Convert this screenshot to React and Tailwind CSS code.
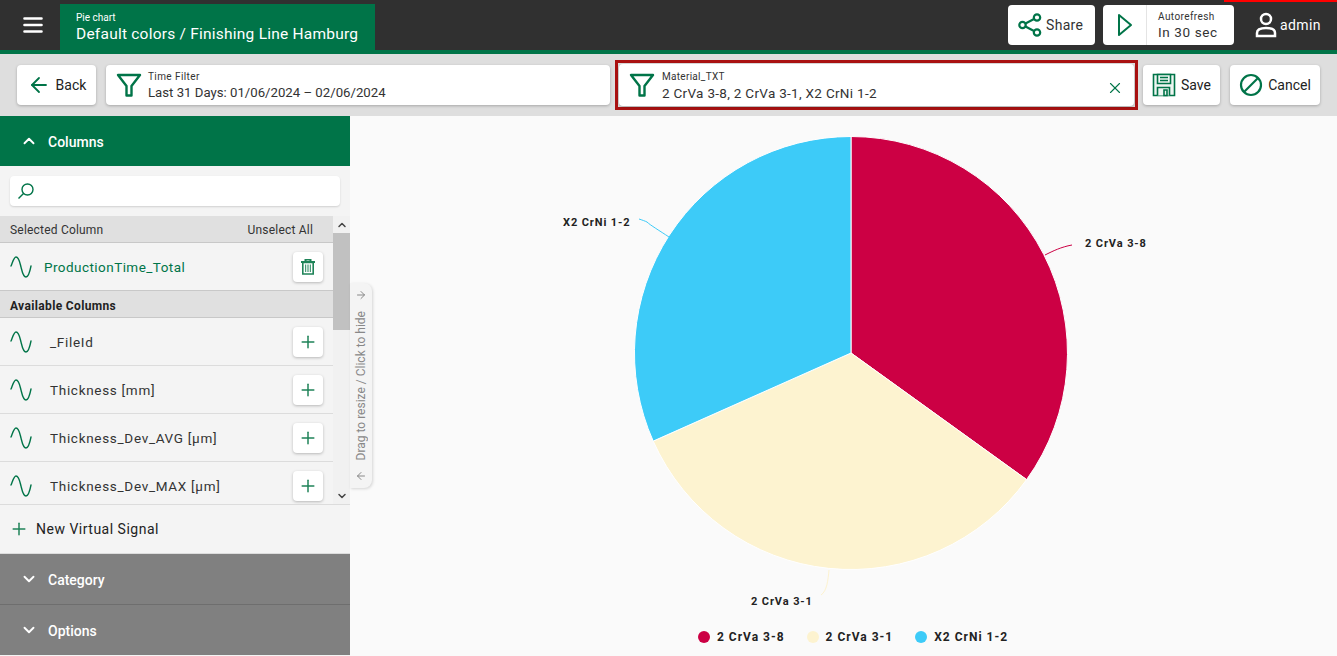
import { ArrowLeft, ArrowRight, ChevronDown, ChevronUp, Plus, X } from 'lucide-react';

const green = '#007448';
const font = { fontFamily: 'Roboto, "Liberation Sans", sans-serif' };

const columns = ['_FileId', 'Thickness [mm]', 'Thickness_Dev_AVG [µm]', 'Thickness_Dev_MAX [µm]'];

function FilterIcon() {
  return (
    <svg width="26" height="26" viewBox="0 0 26 26" fill="none" stroke={green} strokeWidth="2.400" className="shrink-0">
      <path d="M2 3h22l-8.500 11v9.500h-5v-9.500z" strokeLinejoin="round" />
    </svg>
  );
}

function WaveIcon() {
  return (
    <svg width="22" height="22" viewBox="0 0 22 22" fill="none" stroke={green} strokeWidth="1.400" className="shrink-0">
      <path d="M1 10C3 5 4 1 6 1C9 1 10 7 11 11C12 15 13 21 16 21C18 21 20 15 21 10" strokeLinecap="round" />
    </svg>
  );
}

function ShareIcon() {
  return (
    <svg width="24" height="24" viewBox="0 0 24 24" fill="none" stroke={green} strokeWidth="2.200">
      <circle cx="4.500" cy="12" r="3.200" />
      <circle cx="19" cy="4.500" r="3.200" />
      <circle cx="19" cy="19.500" r="3.200" />
      <path d="M7.500 10.500l8.500-4.500M7.500 13.500l8.500 4.500" />
    </svg>
  );
}

function SaveIcon() {
  return (
    <svg width="24" height="24" viewBox="0 0 24 24" fill="#eef6f2" stroke={green} strokeWidth="1.600">
      <path d="M1.500 1.500h21v21h-21z" />
      <path d="M5.500 1.500h13v9h-13zM8 4.500h8M8 7.500h8M5.500 22.500v-8h12v8M12 17h3v5.500h-3z" />
    </svg>
  );
}

function TrashIcon() {
  return (
    <svg width="14" height="16" viewBox="0 0 14 16" fill="none" stroke="#1f8358">
      <path d="M0 3h14M4.500 2V.5h5V2" strokeWidth="2" />
      <path d="M1.800 3.500h10.400v11.500H1.800z" strokeWidth="1.600" />
      <path d="M4.700 5.500v7.500M7 5.500v7.500M9.300 5.500v7.500" strokeWidth="1" />
    </svg>
  );
}

function Pie() {
  return (
    <svg width="987" height="540" viewBox="0 0 987 540" className="block">
      <path d="M501 237L501 20.500A216.500 216.500 0 0 1 676.600 363.600Z" fill="#cc0044" stroke="#fff" strokeWidth="1" />
      <path d="M501 237L676.600 363.600A216.500 216.500 0 0 1 303.200 325.100Z" fill="#fdf3d0" stroke="#fff" strokeWidth="1" />
      <path d="M501 237L303.200 325.100A216.500 216.500 0 0 1 501 20.500Z" fill="#3dcbf8" stroke="#fff" strokeWidth="1" />
      <path d="M695 139c8-4 16-8 27-10" fill="none" stroke="#cc0044" />
      <path d="M319 121c-9-6-19-12-22-15c-2-1-5-2-8-3" fill="none" stroke="#3dcbf8" />
      <path d="M479 454c-1 10-2 21-8 25" fill="none" stroke="#fdf3d0" />
      <g fontSize="11" fontWeight="700" fill="#222" letterSpacing="0.9" style={font}>
        <text x="735" y="131">2 CrVa 3-8</text>
        <text x="213" y="110">X2 CrNi 1-2</text>
        <text x="401" y="489">2 CrVa 3-1</text>
      </g>
    </svg>
  );
}

function LegendItem({ color, label }) {
  return (
    <div className="flex items-center gap-[7px]">
      <span className="h-3 w-3 rounded-full" style={{ backgroundColor: color }} />
      <span className="text-[12px] font-bold tracking-[1px] text-[#222]">{label}</span>
    </div>
  );
}

function AccordionHead({ label, open }) {
  const Icon = open ? ChevronUp : ChevronDown;
  return (
    <div className={`flex h-[50px] items-center gap-[10px] pl-[20px] text-[14px] font-medium text-white ${open ? 'bg-[#007448]' : 'bg-[#808080]'}`}>
      <Icon size={18} strokeWidth={2.500} />
      <span className="pt-[2px]">{label}</span>
    </div>
  );
}

function ToolButton({ icon, label, width }) {
  return (
    <button className={`flex h-[40px] items-center justify-center gap-[5px] rounded-[4px] bg-white text-[14px] text-[#222] shadow-[0_1px_3px_rgba(0,0,0,0.25)] ${width}`}>
      {icon}
      {label}
    </button>
  );
}

export default function App() {
  return (
    <div className="relative flex h-[656px] w-[1337px] flex-col overflow-hidden bg-[#fafafa]" style={font}>
      {/* top bar */}
      <header className="flex h-[54px] shrink-0 border-b-4 border-[#007448] bg-[#303030]">
        <div className="flex w-[60px] items-center justify-center pl-[6px]">
          <svg width="20" height="16" viewBox="0 0 20 16" stroke="#fff" strokeWidth="2.600" strokeLinecap="round">
            <path d="M1.500 1.500h17M1.500 8h17M1.500 14.500h17" />
          </svg>
        </div>
        <div className="mt-[4px] w-[315px] bg-[#007448] pl-[16px] text-white">
          <div className="mt-[9px] text-[10px] leading-[10px]">Pie chart</div>
          <div className="mt-[1px] text-[15.500px] leading-[20px] tracking-[0.23px]">Default colors / Finishing Line Hamburg</div>
        </div>
        <div className="ml-auto mt-[5px] flex h-[40px] w-[87px] items-center rounded-[4px] bg-white pl-[10px] text-[14px] tracking-[0.3px] text-[#333]">
          <ShareIcon />
          <span className="ml-[4px]">Share</span>
        </div>
        <div className="ml-[8px] mt-[5px] flex h-[40px] w-[131px] rounded-[4px] bg-white">
          <div className="flex w-[44px] items-center justify-center border-r border-[#e4e4e4]">
            <svg width="16" height="24" viewBox="0 0 16 24" fill="none" stroke={green} strokeWidth="2">
              <path d="M2 2l12 10L2 22z" strokeLinejoin="round" />
            </svg>
          </div>
          <div className="pl-[11px] text-[#333]">
            <div className="mt-[6px] text-[10px] leading-[12px] tracking-[0.4px]">Autorefresh</div>
            <div className="text-[13.500px] leading-[18px] tracking-[0.6px]">In 30 sec</div>
          </div>
        </div>
        <div className="ml-[21px] mr-[16px] flex items-center gap-[3px] text-[14px] tracking-[0.4px] text-white">
          <svg width="22" height="26" viewBox="0 0 22 26" fill="none" stroke="#fff" strokeWidth="2.500">
            <circle cx="11" cy="7" r="5" />
            <path d="M2 24v-3c0-4 4-5 9-5s9 1 9 5v3z" />
          </svg>
          <span>admin</span>
        </div>
        <div className="absolute right-0 top-0 h-[2px] w-[113px] bg-[#ff0000]" />
      </header>

      {/* filter toolbar */}
      <div className="flex h-[62px] shrink-0 items-center bg-[#dedede] pl-[17px]">
        <ToolButton width="w-[79px]" icon={<ArrowLeft size={24} color={green} strokeWidth={1.800} />} label="Back" />
        <div className="ml-[10px] flex h-[40px] w-[504px] items-center rounded-[4px] bg-white pl-[10px] shadow-[0_1px_3px_rgba(0,0,0,0.25)]">
          <FilterIcon />
          <div className="ml-[6px] mt-[2px] text-[#333]">
            <div className="text-[10px] leading-[12px] tracking-[0.4px]">Time Filter</div>
            <div className="mt-[2px] text-[13.200px] leading-[16px]">Last 31 Days: 01/06/2024 – 02/06/2024</div>
          </div>
        </div>
        <div className="ml-[5px] flex h-[50px] w-[523px] items-center border-[3px] border-[#aa1111] p-[1px]">
          <div className="flex h-full w-full items-center rounded-[4px] bg-white px-[10px] shadow-[0_1px_3px_rgba(0,0,0,0.25)]">
            <FilterIcon />
            <div className="ml-[7px] mt-[2px] text-[#333]">
              <div className="text-[10px] leading-[12px] tracking-[0.3px]">Material_TXT</div>
              <div className="mt-[2px] text-[13.500px] leading-[16px] tracking-[0.3px]">2 CrVa 3-8, 2 CrVa 3-1, X2 CrNi 1-2</div>
            </div>
            <X size={18} color={green} strokeWidth={1.500} className="ml-auto mt-[6px]" />
          </div>
        </div>
        <div className="ml-[5px] flex gap-[10px]">
          <ToolButton width="w-[77px]" icon={<SaveIcon />} label="Save" />
          <ToolButton
            width="w-[90px]"
            icon={
              <svg width="24" height="24" viewBox="0 0 24 24" fill="none" stroke={green} strokeWidth="2.200">
                <circle cx="12" cy="12" r="10" />
                <path d="M5 19L19 5" />
              </svg>
            }
            label="Cancel"
          />
        </div>
      </div>

      <div className="flex min-h-0 flex-1">
        {/* sidebar */}
        <aside className="flex w-[350px] shrink-0 flex-col bg-[#f4f4f4]">
          <AccordionHead label="Columns" open />
          <div className="flex h-[50px] shrink-0 items-center px-[10px]">
            <div className="flex h-[30px] w-full items-center rounded-[4px] bg-white pl-[7px] shadow-[0_1px_2px_rgba(0,0,0,0.15)]">
              <svg width="18" height="18" viewBox="0 0 18 18" fill="none" stroke={green} strokeWidth="1.400">
                <circle cx="10.500" cy="7.500" r="5.500" />
                <path d="M6.500 11.500L1.500 16.500" />
              </svg>
            </div>
          </div>
          <div className="flex h-[288px] shrink-0 overflow-hidden">
            <div className="min-w-0 flex-1">
              <div className="flex h-[27px] items-center justify-between border-b border-[#c8c8c8] bg-[#e0e0e0] pl-[10px] pr-[20px] pt-[2px] text-[12px] tracking-[0.2px] text-[#333]">
                <span>Selected Column</span>
                <span>Unselect All</span>
              </div>
              <div className="flex h-[47px] items-center px-[10px]">
                <WaveIcon />
                <span className="ml-[12px] pt-[2px] text-[13.500px] tracking-[0.45px] text-[#007448]">ProductionTime_Total</span>
                <button className="ml-auto flex h-[30px] w-[30px] items-center justify-center rounded-[4px] bg-white shadow-[0_1px_3px_rgba(0,0,0,0.25)]">
                  <TrashIcon />
                </button>
              </div>
              <div className="flex h-[28px] items-center border-y border-[#c8c8c8] bg-[#e0e0e0] pl-[10px] pt-[3px] text-[12px] font-bold tracking-[0.35px] text-[#222]">
                Available Columns
              </div>
              {columns.map((name) => (
                <div key={name} className="flex h-[48px] shrink-0 items-center border-b border-[#dcdcdc] px-[10px]">
                  <WaveIcon />
                  <span className="ml-[18px] pt-[2px] text-[13.500px] tracking-[0.7px] text-[#333]">{name}</span>
                  <button className="ml-auto flex h-[30px] w-[30px] items-center justify-center rounded-[4px] bg-white shadow-[0_1px_3px_rgba(0,0,0,0.25)]">
                    <Plus size={20} color="#1f8358" strokeWidth={1.800} />
                  </button>
                </div>
              ))}
            </div>
            {/* scrollbar */}
            <div className="flex w-[17px] shrink-0 flex-col bg-[#f1f1f1] text-[#444]">
              <div className="flex h-[17px] items-center justify-center">
                <ChevronUp size={12} strokeWidth={3} />
              </div>
              <div className="h-[97px] bg-[#c1c1c1]" />
              <div className="flex flex-1 items-end justify-center pb-[2px]">
                <ChevronDown size={12} strokeWidth={3} />
              </div>
            </div>
          </div>
          <div className="flex h-[49px] shrink-0 items-center border-t border-[#dcdcdc] pl-[9px] text-[14px] tracking-[0.5px] text-[#222]">
            <Plus size={20} color="#1f8358" strokeWidth={1.800} />
            <span className="ml-[7px]">New Virtual Signal</span>
          </div>
          <div className="h-[1px] shrink-0 bg-[#dcdcdc]" />
          <AccordionHead label="Category" />
          <div className="h-[1px] shrink-0 bg-[#6e6e6e]" />
          <AccordionHead label="Options" />
        </aside>

        {/* chart */}
        <main className="relative min-w-0 flex-1">
          <Pie />
          <div className="absolute left-[348px] top-[512px] flex gap-[22px]">
            <LegendItem color="#cc0044" label="2 CrVa 3-8" />
            <LegendItem color="#fdf3d0" label="2 CrVa 3-1" />
            <LegendItem color="#3dcbf8" label="X2 CrNi 1-2" />
          </div>
          <div className="absolute left-0 top-[167px] flex h-[205px] w-[22px] flex-col items-center justify-between rounded-r-[8px] bg-[#f4f4f4] py-[6px] text-[#888] shadow-[1px_1px_3px_rgba(0,0,0,0.15)]">
            <ArrowRight size={12} />
            <span className="rotate-180 text-[12px] leading-[12px] [writing-mode:vertical-rl]">Drag to resize / Click to hide</span>
            <ArrowLeft size={12} />
          </div>
        </main>
      </div>
    </div>
  );
}
